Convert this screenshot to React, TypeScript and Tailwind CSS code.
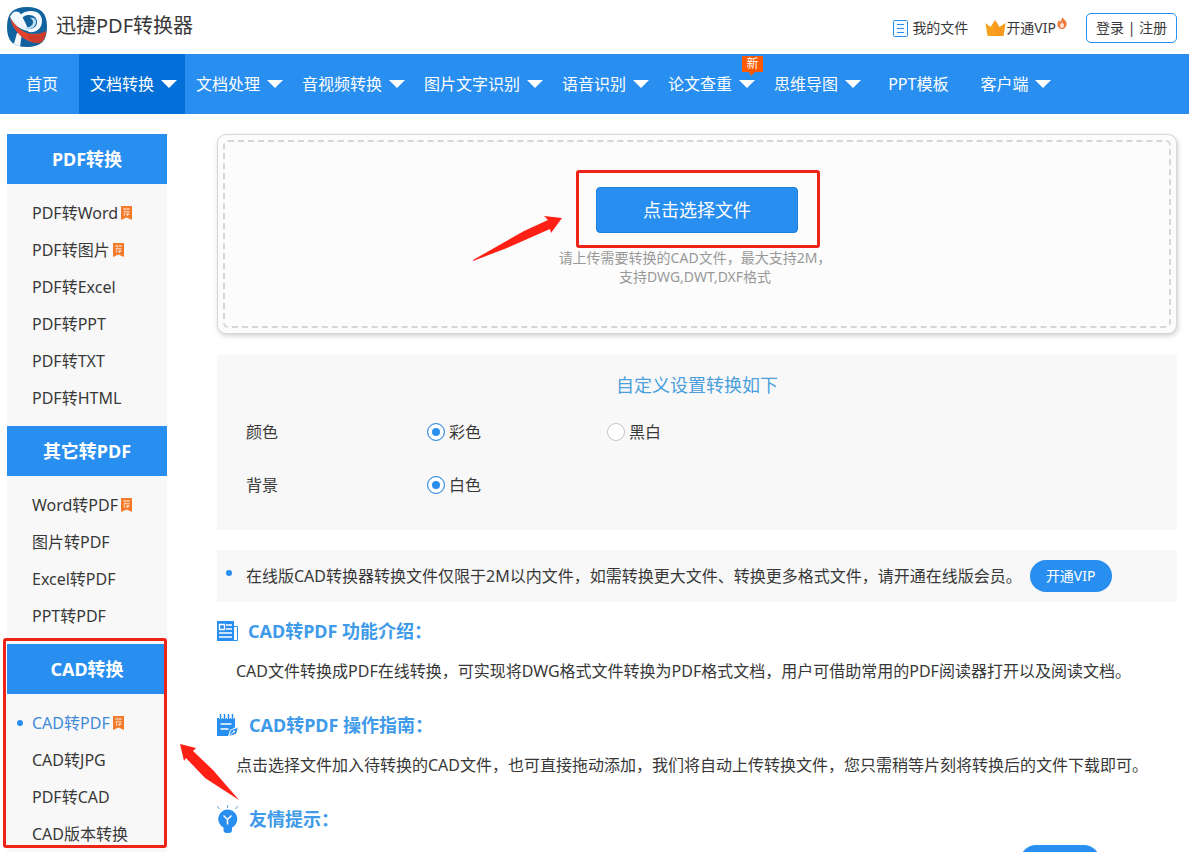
import { useState } from 'react'
import type { ReactNode } from 'react'

interface NavItem {
  label: string
  menu?: boolean
  active?: boolean
  isNew?: boolean
}

interface SideItem {
  label: string
  recommended?: boolean
  active?: boolean
}

interface SideGroup {
  title: string
  items: SideItem[]
  highlighted?: boolean
}

const NAV_ITEMS: NavItem[] = [
  { label: '首页' },
  { label: '文档转换', menu: true, active: true },
  { label: '文档处理', menu: true },
  { label: '音视频转换', menu: true },
  { label: '图片文字识别', menu: true },
  { label: '语音识别', menu: true },
  { label: '论文查重', menu: true, isNew: true },
  { label: '思维导图', menu: true },
  { label: 'PPT模板' },
  { label: '客户端', menu: true },
]

const SIDE_GROUPS: SideGroup[] = [
  {
    title: 'PDF转换',
    items: [
      { label: 'PDF转Word', recommended: true },
      { label: 'PDF转图片', recommended: true },
      { label: 'PDF转Excel' },
      { label: 'PDF转PPT' },
      { label: 'PDF转TXT' },
      { label: 'PDF转HTML' },
    ],
  },
  {
    title: '其它转PDF',
    items: [
      { label: 'Word转PDF', recommended: true },
      { label: '图片转PDF' },
      { label: 'Excel转PDF' },
      { label: 'PPT转PDF' },
    ],
  },
  {
    title: 'CAD转换',
    highlighted: true,
    items: [
      { label: 'CAD转PDF', recommended: true, active: true },
      { label: 'CAD转JPG' },
      { label: 'PDF转CAD' },
      { label: 'CAD版本转换' },
    ],
  },
]

function Logo() {
  return (
    <svg viewBox="0 0 40 40" className="w-10 h-10" aria-hidden="true">
      <defs>
        <clipPath id="logo-shape">
          <path d="M20 0C34 0 40 6 40 20S34 40 20 40 0 34 0 20 6 0 20 0z" />
        </clipPath>
      </defs>
      <g clipPath="url(#logo-shape)">
        <rect width="40" height="40" fill="#11639f" />
        <path d="M10 26h5l-2 14H6z" fill="#f1f7fb" />
        <path d="M3 10C5 5 9 3 13 6l5 9 4 9C13 23 7 18 3 10z" fill="#f3f9fd" />
        <path d="M12 10c2-4 7-6 12-6 7 0 11 4 11 10 0 7-5 12-13 11l-4-3c8 1 12-2 12-7 0-4-3-7-8-7-4 0-7 2-8 6z" fill="#f3f9fd" />
        <path d="M17 20c5 1 9-1 9-5 0-2-1-3-3-4 4-1 6 1 6 4 0 5-5 8-10 7z" fill="#b9dcf0" />
        <path d="M3 11c6 9 14 16 23 16 6 0 10-1 13-3 0 6-3 12-8 12C18 36 6 24 3 11z" fill="#e2432f" />
        <path d="M20 28c6 1 13 0 19-4 0 6-3 12-8 12-6 0-9-4-11-8z" fill="#c93a2b" />
      </g>
    </svg>
  )
}

function FileIcon() {
  return (
    <svg viewBox="0 0 15 17" className="w-[15px] h-[17px]" aria-hidden="true">
      <rect x=".5" y=".5" width="14" height="16" rx="1" fill="#f4faff" stroke="#288ef0" />
      <path d="M4 4.500h7M4 8.500h7M4 12.500h7" stroke="#288ef0" />
    </svg>
  )
}

function CrownIcon() {
  return (
    <svg viewBox="0 0 20 16" className="w-[21px] h-4" aria-hidden="true">
      <path d="M0 3l5 4 4.500-7L14 7l6-4-2 13H2z" fill="#f9a01f" />
      <path d="M9.500 0L14 7l6-4-2 13H9.500z" fill="#f08a18" opacity=".3" />
    </svg>
  )
}

function FlameIcon() {
  return (
    <svg viewBox="0 0 10 12" className="w-[10px] h-3" aria-hidden="true">
      <path d="M5 0c1 2 4 3 4.500 6C10 10 7 12 5 12S0 10 .500 6.500C.700 5 1.500 4 2 3l1 2C4 4 5 2 5 0z" fill="#ee7a3c" />
      <path d="M5 5c1 1.500 2 2 2 3.500S6 11 5 11s-2-1-2-2.500S4.500 6.500 5 5z" fill="#fde3d3" />
    </svg>
  )
}

function Caret() {
  return (
    <svg viewBox="0 0 16 8" className="w-4 h-2" aria-hidden="true">
      <path d="M0 0h16L8 8z" fill="#fff" />
    </svg>
  )
}

function NewBadge() {
  return (
    <span className="absolute right-0 top-[2px] w-[21px] h-4 rounded-[1px] bg-[#ff5a00] text-[12px] leading-4 text-center">
      新
      <svg viewBox="0 0 6 4" className="absolute left-[7px] top-4 w-[6px] h-1" aria-hidden="true">
        <path d="M0 0h6L2 4z" fill="#ff5a00" />
      </svg>
    </span>
  )
}

function RecommendTag() {
  return (
    <svg viewBox="0 0 11 14" className="w-[11px] h-[14px] ml-[3px]" aria-hidden="true">
      <path d="M0 0h11v14l-5.500-2.500L0 14z" fill="#f47a2c" />
      <path d="M2 3h7M4 2v2M7 2v2M3 5.500h5.500M4.500 4.500L2.500 7M3.500 6.500v3.500M5 7h3L6.500 8v2M4.800 8.500h3.700" stroke="#ffe9da" strokeWidth=".7" fill="none" />
    </svg>
  )
}

function NewsIcon() {
  return (
    <svg viewBox="0 0 21 20" className="w-[21px] h-5" aria-hidden="true">
      <path d="M0 0h17v20H0z" fill="#288ef0" />
      <path d="M17 5.500h3.500v14H16" fill="none" stroke="#288ef0" />
      <path d="M2.500 3.500h5v5h-5zM9 4h6M9 8h6M2 12h13M2 16h13" fill="none" stroke="#fff" strokeWidth="1.400" />
    </svg>
  )
}

function NotepadIcon() {
  return (
    <svg viewBox="0 0 22 23" className="w-[22px] h-[23px]" aria-hidden="true">
      <path d="M0 4h18v9l-7 9H0z" fill="#288ef0" />
      <path d="M3.500 0v5M7.500 0v5M11.500 0v5M15.500 0v5" stroke="#fff" strokeWidth="3" />
      <path d="M3.500 0v5M7.500 0v5M11.500 0v5M15.500 0v5" stroke="#288ef0" strokeWidth="1.500" />
      <path d="M3.500 10h11M3.500 15h8" stroke="#fff" strokeWidth="1.500" />
      <path d="M21.500 13l-2 7-8 3 2-7z" fill="#288ef0" stroke="#fff" />
      <path d="M12 22.500l4.500-4.500" stroke="#fff" />
      <circle cx="17" cy="17.500" r="1" fill="#fff" />
    </svg>
  )
}

function BulbIcon() {
  return (
    <svg viewBox="0 0 22 28" className="w-[22px] h-7" aria-hidden="true">
      <path d="M10.500 0v3M0 1l2.500 3M21 1l-2.500 3" stroke="#6d9fc9" fill="none" />
      <path d="M10.500 4.500a9.500 9.500 0 0 1 4.500 18V25a3 3 0 0 1-3 3H9.500a3 3 0 0 1-3-3v-2.500a9.500 9.500 0 0 1 4-18z" fill="#288ef0" />
      <path d="M6.500 10.500l4 4 4-4M10.500 14.500v5" stroke="#fff" strokeWidth="1.500" fill="none" />
    </svg>
  )
}

function Header() {
  return (
    <header className="flex items-center justify-between h-[54px] pl-[7px] pr-3">
      <a href="#" className="flex items-center gap-[9px] text-xl">
        <Logo />
        <span className="pb-[2px]">迅捷PDF转换器</span>
      </a>
      <div className="flex items-center gap-[17px] pt-[2px] text-sm">
        <a href="#" className="flex items-center gap-1">
          <FileIcon />
          我的文件
        </a>
        <a href="#" className="flex items-center">
          <CrownIcon />
          开通VIP
          <span className="self-start ml-px -mt-px"><FlameIcon /></span>
        </a>
        <a href="#" className="ml-[2px] px-[9px] h-[30px] leading-[28px] border border-[#288ef0] rounded-[5px]">
          登录 | 注册
        </a>
      </div>
    </header>
  )
}

function NavBar() {
  return (
    <nav className="flex h-[60px] pl-[7px] bg-[#288ef0] text-white whitespace-nowrap">
      {NAV_ITEMS.map(item => (
        item.menu ? (
          <button
            key={item.label}
            className={`relative flex items-center gap-[7px] pl-[11px] pr-2 ${item.active ? 'bg-[#0270d8]' : ''}`}
          >
            {item.label}
            <Caret />
            {item.isNew && <NewBadge />}
          </button>
        ) : (
          <a key={item.label} href="#" className="flex items-center pl-[19px] pr-[21px]">{item.label}</a>
        )
      ))}
    </nav>
  )
}

function Sidebar() {
  return (
    <aside className="w-40 shrink-0 bg-[#f8f8f8]">
      {SIDE_GROUPS.map(group => (
        <section key={group.title} className="relative">
          <h2 className="h-[50px] leading-[50px] bg-[#288ef0] text-white text-lg font-bold text-center">
            {group.title}
          </h2>
          <ul className="py-[10px]">
            {group.items.map(item => (
              <li key={item.label}>
                <a
                  href="#"
                  className={`relative flex items-center h-[37px] pl-[25px] ${item.active ? 'text-[#4089d8]' : ''}`}
                >
                  {item.active && <i className="absolute left-[10px] size-[6px] rounded-full bg-[#288ef0]" />}
                  {item.label}
                  {item.recommended && <RecommendTag />}
                </a>
              </li>
            ))}
          </ul>
          {group.highlighted && (
            <>
              <div className="absolute -top-[6px] -left-1 right-0 bottom-[14px] border-3 border-[#ee2418] rounded-[3px] pointer-events-none" />
              <svg viewBox="0 0 60 56" className="absolute left-[173px] top-[100px] w-[60px] h-14 pointer-events-none" aria-hidden="true">
                <path d="M0 0l16 4-3 3 20 19 26 30L25 34 6 14 4 17z" fill="#ff2015" />
              </svg>
            </>
          )}
        </section>
      ))}
    </aside>
  )
}

function UploadPanel() {
  return (
    <section className="h-[200px] p-[5px] border border-[#d8d8d8] rounded-[9px] bg-[#fcfcfc] shadow-[1px_2px_5px_rgba(0,0,0,0.18)]">
      <div className="h-full pt-[45px] border-2 border-dashed border-[#d6d6d6] rounded-[5px] text-center">
        <div className="relative inline-block">
          <button className="block w-[202px] h-[46px] rounded-[4px] border border-[#1f7fdb] bg-[#288ef0] text-white text-lg">
            点击选择文件
          </button>
          <div className="absolute -top-[17px] -left-5 -right-[22px] -bottom-[15px] border-3 border-[#ee2418] rounded-[3px] pointer-events-none" />
          <svg viewBox="0 0 90 46" className="absolute -left-[123px] top-[29px] w-[90px] h-[46px] pointer-events-none" aria-hidden="true">
            <path d="M89 2L71 0l4 4-24 11L0 44v1l34-13 43-19 1 4z" fill="#ff2015" />
          </svg>
        </div>
        <p className="mt-[15px] pr-1 text-sm leading-[19px] text-[#999]">
          请上传需要转换的CAD文件，最大支持2M，
          <br />
          支持DWG,DWT,DXF格式
        </p>
      </div>
    </section>
  )
}

interface RadioProps {
  name: string
  label: string
  checked: boolean
  onSelect: () => void
}

function Radio({ name, label, checked, onSelect }: RadioProps) {
  return (
    <label className="flex items-center gap-1 w-[180px]">
      <input
        type="radio"
        name={name}
        checked={checked}
        onChange={onSelect}
        className="appearance-none size-[18px] rounded-full border border-[#c4c4c4] bg-white checked:border-[#3d8be0] checked:bg-[#288ef0] checked:shadow-[inset_0_0_0_4px_#fff]"
      />
      {label}
    </label>
  )
}

function Settings() {
  const [color, setColor] = useState('彩色')
  const [background, setBackground] = useState('白色')

  return (
    <section className="mt-[21px] pt-4 pb-[33px] px-[29px] bg-[#f8f8f8]">
      <h3 className="text-lg leading-7 text-center text-[#4a9fdc]">自定义设置转换如下</h3>
      <div className="flex items-center h-6 mt-[21px]">
        <span className="w-[181px]">颜色</span>
        {['彩色', '黑白'].map(v => (
          <Radio key={v} name="color" label={v} checked={color === v} onSelect={() => setColor(v)} />
        ))}
      </div>
      <div className="flex items-center h-6 mt-[29px]">
        <span className="w-[181px]">背景</span>
        <Radio name="background" label="白色" checked={background === '白色'} onSelect={() => setBackground('白色')} />
      </div>
    </section>
  )
}

function Notice() {
  return (
    <section className="relative flex items-center mt-5 h-[52px] pl-[29px] bg-[#f8f8f8]">
      <i className="absolute left-[9px] top-5 size-[6px] rounded-full bg-[#288ef0]" />
      <p>在线版CAD转换器转换文件仅限于2M以内文件，如需转换更大文件、转换更多格式文件，请开通在线版会员。</p>
      <button className="ml-2 w-[82px] h-8 rounded-full bg-[#288ef0] text-white text-sm">开通VIP</button>
    </section>
  )
}

function Article({ icon, title, children }: { icon: ReactNode; title: string; children: ReactNode }) {
  return (
    <section className="mb-[25px]">
      <h3 className="flex items-center gap-[10px] h-7 text-lg font-bold text-[#3f9be9]">
        {icon}
        {title}
      </h3>
      {children}
    </section>
  )
}

export default function App() {
  return (
    <div className="h-screen overflow-hidden bg-white text-[#383838] text-base font-normal font-['Noto_Sans','Noto_Sans_CJK_SC',sans-serif]">
      <Header />
      <NavBar />
      <div className="flex gap-[50px] mt-5 pl-[7px] pr-3">
        <Sidebar />
        <main className="flex-1 min-w-0">
          <UploadPanel />
          <Settings />
          <Notice />
          <div className="mt-[15px]">
            <Article icon={<NewsIcon />} title="CAD转PDF 功能介绍：">
              <p className="mt-3 pl-[19px] pb-px leading-7">
                CAD文件转换成PDF在线转换，可实现将DWG格式文件转换为PDF格式文档，用户可借助常用的PDF阅读器打开以及阅读文档。
              </p>
            </Article>
            <Article icon={<NotepadIcon />} title="CAD转PDF 操作指南：">
              <p className="mt-3 pl-[19px] pb-px leading-7">
                点击选择文件加入待转换的CAD文件，也可直接拖动添加，我们将自动上传转换文件，您只需稍等片刻将转换后的文件下载即可。
              </p>
            </Article>
            <Article icon={<BulbIcon />} title="友情提示：">
              <div className="flex justify-end mt-3 pr-[77px]">
                <button aria-label="开通VIP" className="w-20 h-8 rounded-full bg-[#288ef0]" />
              </div>
            </Article>
          </div>
        </main>
      </div>
    </div>
  )
}
